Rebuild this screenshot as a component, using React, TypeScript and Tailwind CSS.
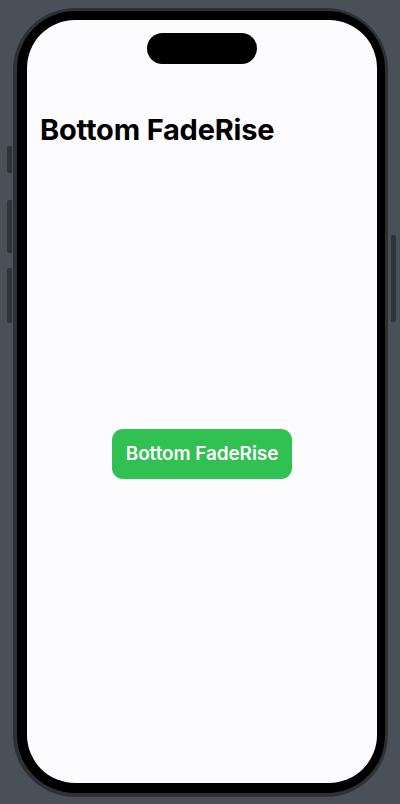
export default function App() {
    return (
        <div className="w-[400px] h-[804px] bg-[#4a5058] pt-[8px] pl-[13px] font-['Inter',sans-serif]">
            {/* Phone body */}
            <div className="relative w-[375px] h-[789px] rounded-[62px] bg-[#2d3136] pt-[3px] pl-[4px] pr-[3px] pb-[4px]">
                {/* Side buttons */}
                <div className="absolute left-[-6px] top-[138px] w-[5px] h-[27px] rounded-l-[2px] bg-[#30343a]" />
                <div className="absolute left-[-6px] top-[192px] w-[5px] h-[53px] rounded-l-[2px] bg-[#30343a]" />
                <div className="absolute left-[-6px] top-[260px] w-[5px] h-[55px] rounded-l-[2px] bg-[#30343a]" />
                <div className="absolute right-[-8px] top-[227px] w-[5px] h-[87px] rounded-r-[2px] bg-[#30343a]" />

                {/* Bezel */}
                <div className="w-full h-full rounded-[58px] bg-black pt-[9px] pl-[10px] pr-[8px] pb-[10px]">
                    {/* Screen */}
                    <div className="relative w-[350px] h-[763px] rounded-[48px] bg-[#fcfbfe] overflow-hidden">
                        <div className="absolute top-[13px] left-[120px] w-[110px] h-[31px] rounded-full bg-black" />

                        <div className="pt-[92px] pl-[13px]">
                            <h1 className="text-[29px] leading-[36px] font-bold text-black tracking-[-0.2px]">
                                Bottom FadeRise
                            </h1>
                        </div>

                        <div className="mt-[281px] flex justify-center">
                            <button className="w-[180px] h-[50px] rounded-[11px] bg-[#31c052] text-white text-[19px] font-semibold tracking-[-0.1px]">
                                Bottom FadeRise
                            </button>
                        </div>
                    </div>
                </div>
            </div>
        </div>
    );
}
